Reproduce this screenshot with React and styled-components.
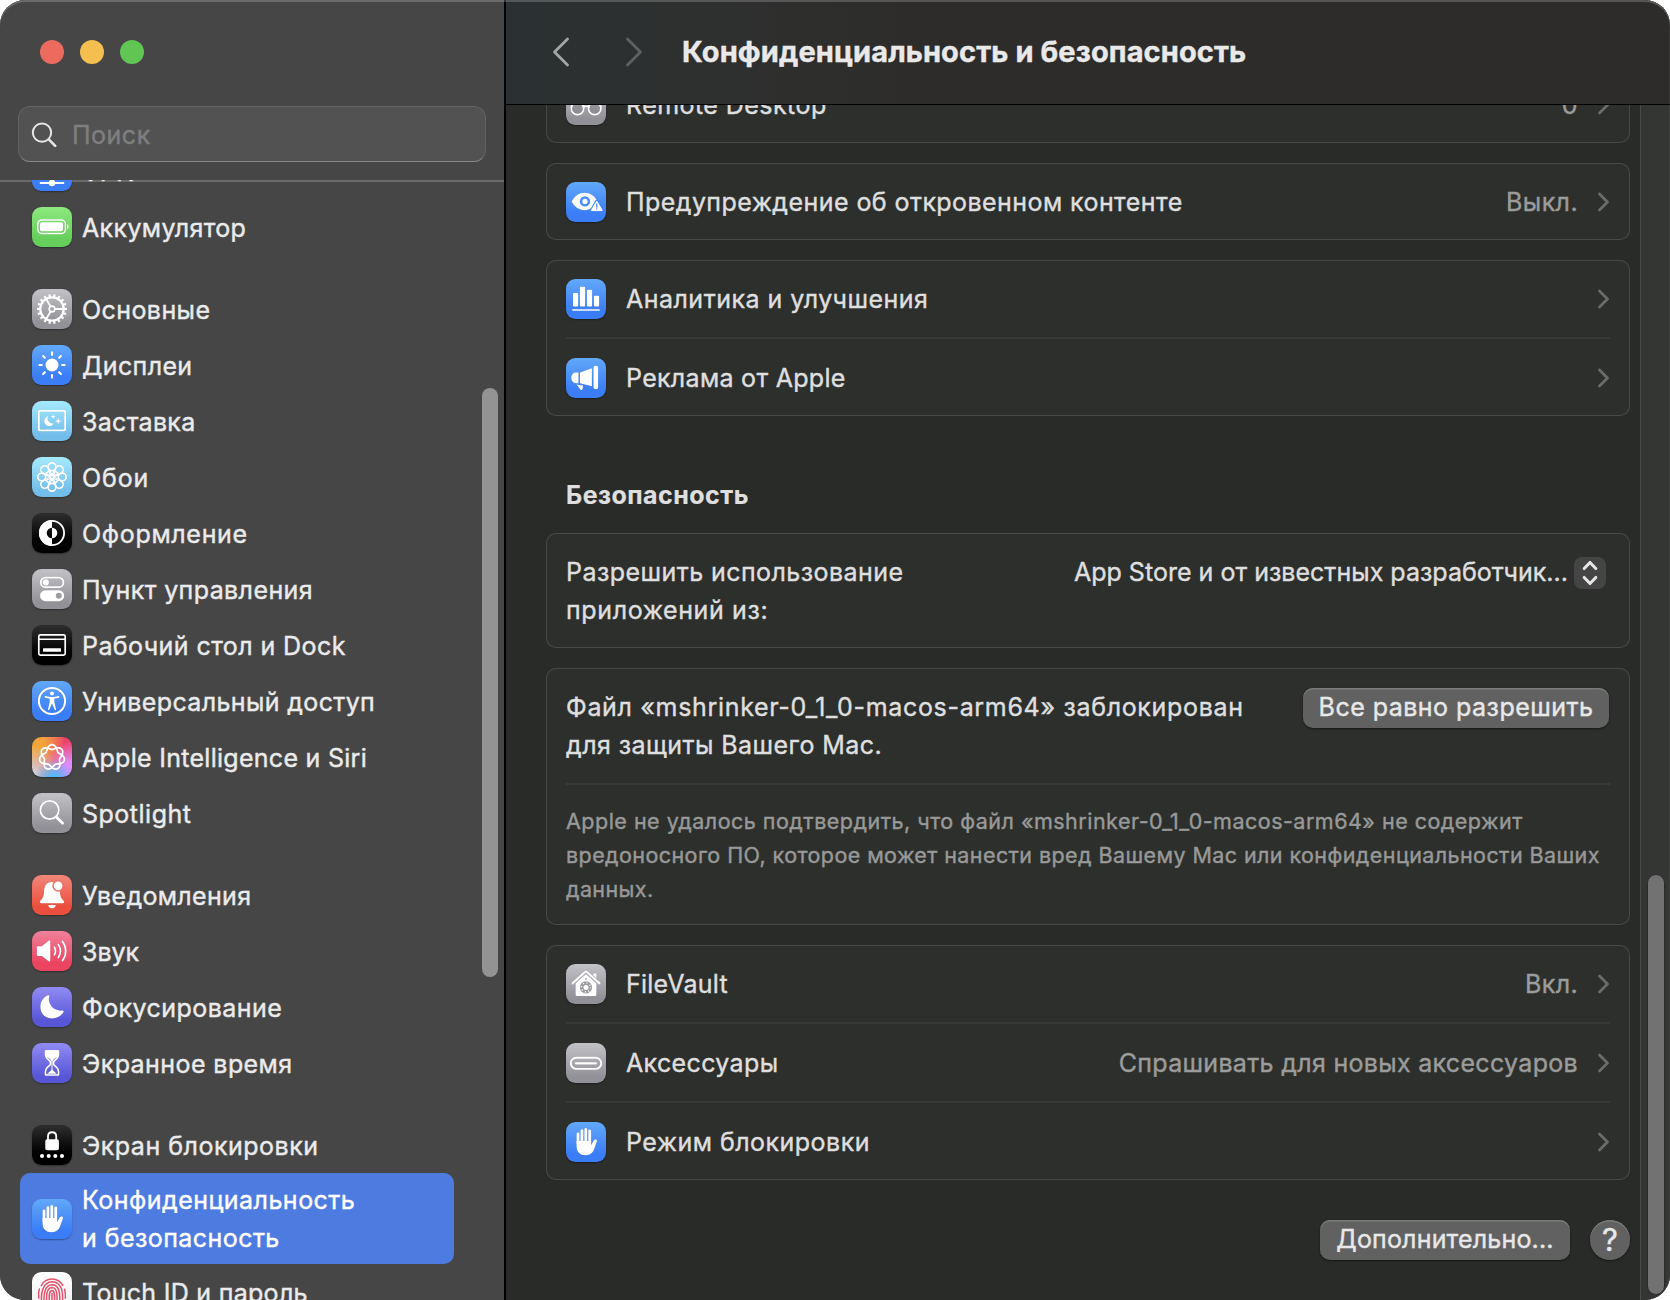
import React from "react";
import styled, { createGlobalStyle, css } from "styled-components";

const GlobalStyle = createGlobalStyle`
  *, *::before, *::after { box-sizing: border-box; }
  body { margin: 0; background: #fff; }
  #root {
    font-family: Inter, "Open Sans", sans-serif;
    font-size: 25px;
    line-height: 38px;
    -webkit-text-stroke: 0.4px currentColor;
  }
`;

/* ---------- window ---------- */

const Window = styled.div`
  position: relative;
  display: grid;
  grid-template-columns: 506px 1fr;
  width: 1670px;
  height: 1300px;
  overflow: hidden;
  border-radius: 25px;
  background: #292b28;

  &::after {
    content: "";
    position: absolute;
    inset: 0;
    border-radius: inherit;
    box-shadow: inset 0 2px 0 rgba(255, 255, 255, 0.2), inset -1px 0 0 rgba(255, 255, 255, 0.06);
    pointer-events: none;
  }
`;

const Label = styled.span`
  display: block;
  white-space: nowrap;
  letter-spacing: ${(p) => p.$ls ?? 0.45}px;
`;

/* ---------- icon tiles ---------- */

const tones = {
  gray: "linear-gradient(#c3c2c7, #929197 85%)",
  blue: "linear-gradient(#62a8f9, #3a7df6 80%)",
  cyan: "linear-gradient(#a5eafd, #73bdea 85%)",
  black: "linear-gradient(#2e2e2e, #000 70%)",
  green: "linear-gradient(#8de87e, #66cf5b 80%)",
  red: "linear-gradient(#f1877b, #ea4e3d 80%)",
  pink: "linear-gradient(#f0819b, #ea4461 80%)",
  purple: "linear-gradient(#918bf2, #5855d6 85%)",
  white: "linear-gradient(#ffffff, #eeeeee)",
  siri: `radial-gradient(circle at 55% 108%, #55b8fb 0 10%, transparent 42%),
    radial-gradient(circle at 0% 92%, #d3cdd6 0 6%, transparent 52%),
    radial-gradient(circle at 100% 82%, #dd8cfb 0 15%, transparent 55%),
    radial-gradient(circle at 0% 15%, #f2a63a 0 18%, transparent 62%),
    linear-gradient(100deg, #f08f55, #ee4369 70%)`,
};

const Tile = styled.span`
  flex: none;
  width: 40px;
  height: 40px;
  border-radius: 9.5px;
  background: ${(p) => tones[p.$tone]};
  box-shadow: 0 1px 1.5px rgba(0, 0, 0, 0.35);

  svg {
    display: block;
    width: 40px;
    height: 40px;
    ${(p) => p.$tone !== "white" && css`filter: drop-shadow(0 0.6px 0.6px rgba(0, 0, 0, 0.18));`}
  }
`;

const Glyph = ({ children }) => (
  <svg viewBox="0 0 40 40" fill="none" stroke="#fff" strokeWidth="1.8" strokeLinecap="round" strokeLinejoin="round">
    {children}
  </svg>
);

const solid = { fill: "#fff", stroke: "none" };
const around = (n, fn) => Array.from({ length: n }, (_, i) => fn((i * 360) / n));

const siriPath = (() => {
  const pts = [];
  for (let i = 0; i < 280; i++) {
    const t = (i / 280) * Math.PI * 4;
    const r = 10.2 + 2.4 * Math.cos(3.5 * t);
    pts.push(`${(20 + r * Math.sin(t)).toFixed(2)} ${(20.3 - r * Math.cos(t)).toFixed(2)}`);
  }
  return `M${pts.join("L")}Z`;
})();

const icons = {
  vpn: (
    <Glyph>
      <circle cx="20" cy="15" r="9" />
      <path d="M20 24v5M11 15h18M8.5 32H31.5" />
      <circle {...solid} cx="20" cy="32" r="3.3" />
    </Glyph>
  ),
  battery: (
    <Glyph>
      <rect x="5.8" y="13" width="27.6" height="13.4" rx="4" strokeWidth="1.5" />
      <rect {...solid} x="8" y="15.2" width="23" height="9" rx="1.8" />
      <path {...solid} d="M35.2 17.2c2 .8 2 4.2 0 5Z" />
    </Glyph>
  ),
  gear: (
    <Glyph>
      <g strokeWidth="2.3" strokeLinecap="butt">
        {around(18, (a) => (
          <path key={a} d="M20 5V8.4" transform={`rotate(${a + 10} 20 20)`} />
        ))}
      </g>
      <circle cx="20" cy="20" r="11.7" strokeWidth="2.3" />
      <circle cx="20" cy="20" r="2.8" strokeWidth="1.8" />
      <g strokeWidth="1.9">
        {[90, 210, 330].map((a) => (
          <path key={a} d="M20 17.2V8.4" transform={`rotate(${a} 20 20)`} />
        ))}
      </g>
    </Glyph>
  ),
  sun: (
    <Glyph>
      <circle {...solid} cx="20" cy="20" r="6.5" />
      {around(8, (a) => (
        <path key={a} d="M20 7.4V9.9" strokeWidth="2.1" transform={`rotate(${a} 20 20)`} />
      ))}
    </Glyph>
  ),
  screensaver: (
    <Glyph>
      <rect x="6.9" y="9.9" width="26.2" height="19.4" rx="0.6" strokeWidth="1.8" strokeLinejoin="miter" />
      <path {...solid} d="M16.3 15A5.1 5.1 0 1 0 21.9 22.3A5 5 0 0 1 16.3 15Z" />
      <path {...solid} d="M21.2 13l.7 1.9 1.9.7-1.9.7-.7 1.9-.7-1.9-1.9-.7 1.9-.7ZM26.2 16.6l.9 2.6 2.6.9-2.6.9-.9 2.6-.9-2.6-2.6-.9 2.6-.9Z" />
    </Glyph>
  ),
  flower: (
    <Glyph>
      <g strokeWidth="1.7">
        {around(8, (a) => (
          <g key={a} transform={`rotate(${a} 20 20)`}>
            <circle cx="20" cy="9.7" r="3.9" />
            <path d="M17.2 12.4C18.4 13.8 19.2 16 20 18.6C20.8 16 21.6 13.8 22.8 12.4" strokeWidth="1.3" />
          </g>
        ))}
        <circle cx="20" cy="20" r="1.6" strokeWidth="1.1" />
      </g>
    </Glyph>
  ),
  contrast: (
    <Glyph>
      <circle cx="20" cy="20" r="12.1" strokeWidth="1.8" />
      <path {...solid} d="M20 7A13 13 0 0 0 20 33V25.3A5.3 5.3 0 0 1 20 14.7Z" />
      <path {...solid} d="M20 14.7A5.3 5.3 0 0 1 20 25.3Z" />
    </Glyph>
  ),
  toggles: (
    <Glyph>
      <rect x="8.8" y="8.6" width="22.6" height="9.6" rx="4.8" strokeWidth="1.8" />
      <circle {...solid} cx="13.8" cy="13.4" r="3.1" />
      <rect {...solid} x="8" y="21.2" width="24.2" height="11" rx="5.5" />
      <circle cx="26.8" cy="26.7" r="3" fill="#9d9ca1" stroke="none" />
    </Glyph>
  ),
  dock: (
    <Glyph>
      <rect x="6.8" y="9.9" width="26.4" height="20.2" rx="1.6" strokeWidth="1.7" />
      <path d="M7 14.2H33" strokeWidth="1.4" />
      <rect {...solid} x="11" y="23.3" width="18" height="3.5" rx="0.5" />
    </Glyph>
  ),
  accessibility: (
    <Glyph>
      <circle cx="20" cy="20" r="13.1" strokeWidth="2" />
      <circle {...solid} cx="20" cy="12.6" r="2" />
      <path d="M13.4 15.9C17.6 17 22.4 17 26.6 15.9" strokeWidth="1.7" />
      <path {...solid} d="M17.6 16.5H22.4L22.3 20.8L24 28.2c.2 1-1.1 1.3-1.4.4L20 22.4L17.4 28.6c-.3.9-1.6.6-1.4-.4L17.7 20.8Z" />
    </Glyph>
  ),
  siri: (
    <Glyph>
      <path d={siriPath} strokeWidth="1.8" />
    </Glyph>
  ),
  search: (
    <Glyph>
      <circle cx="17.6" cy="17" r="9.2" strokeWidth="1.8" />
      <path d="M24.4 24L30.6 30.2" strokeWidth="2.8" />
    </Glyph>
  ),
  bell: (
    <Glyph>
      <path {...solid} d="M20 7C15 7 12.4 10.4 12.2 15.2C12 20.6 11.2 22.6 8.5 25.6C7.3 27 7.9 28.3 9.4 28.3H30.6C32.1 28.3 32.7 27 31.5 25.6C28.8 22.6 28 20.6 27.8 15.2C27.6 10.4 25 7 20 7Z" />
      <path {...solid} d="M16.2 29.9H23.8C23.4 32.2 22 33.3 20 33.3C18 33.3 16.6 32.2 16.2 29.9Z" />
      <circle cx="26.1" cy="10.8" r="5.1" fill="#fff" stroke="#ee7568" strokeWidth="1.5" />
    </Glyph>
  ),
  speaker: (
    <Glyph>
      <path {...solid} d="M6 15.2H9.8L16.4 9.9C17.4 9.1 18.3 9.5 18.3 10.7V29.3C18.3 30.5 17.4 30.9 16.4 30.1L9.8 24.9H6C5.2 24.9 4.9 24.4 4.9 23.7V16.4C4.9 15.7 5.2 15.2 6 15.2Z" />
      <path d="M22.4 16.2C23.7 18.5 23.7 21.5 22.4 23.8M26.3 13.4C28.9 17.4 28.9 22.6 26.3 26.6M30.5 10.4C34.8 16 34.8 24 30.5 29.6" strokeWidth="1.7" />
    </Glyph>
  ),
  moon: (
    <Glyph>
      <path {...solid} d="M16 8.3C16.9 7.9 17.6 8.5 17.2 9.4C15.2 15.8 21 24.6 30.4 23.6C31.5 23.5 32 24.1 31.5 25C25.9 34.8 8.4 33.6 8.4 19.8C8.4 14.4 11.6 10.2 16 8.3Z" />
    </Glyph>
  ),
  hourglass: (
    <Glyph>
      <path d="M13.6 8H26.4C26.9 13 26.6 14.6 21.6 18.6V21.6C26.6 25.6 26.9 27.2 26.4 32H13.6C13.1 27.2 13.4 25.6 18.4 21.6V18.6C13.4 14.6 13.1 13 13.6 8Z" strokeWidth="1.6" />
      <path {...solid} d="M13 7.2H27L26.2 13.2C24 14.4 22 15.6 20 18.4C18 15.6 16 14.4 13.8 13.2ZM15.2 30.8L20 26.4L24.8 30.8Z" />
      <path d="M20 18V27" strokeWidth="1.1" />
    </Glyph>
  ),
  lock: (
    <Glyph>
      <rect {...solid} x="13.3" y="14.2" width="13.6" height="11" rx="1.8" />
      <path d="M16 15V11.2C16 5.9 24.2 5.9 24.2 11.2V15" strokeWidth="1.8" />
      {[10, 16.7, 23.3, 30].map((x) => (
        <circle key={x} {...solid} cx={x} cy="31" r="2" />
      ))}
    </Glyph>
  ),
  hand: (
    <Glyph>
      <path d="M12 11.8V22M15.9 8.6V22M19.8 7.5V22M23.7 9V22" strokeWidth="2.8" />
      <path {...solid} d="M10.6 19H25.1V23.2C26 21.6 27 19.6 27.7 18.4c.9-1.5 3.7-1 3.2.9L28.4 26.6C26.9 31 24 33.3 19.6 33.3c-6 0-9-3.8-9-8.8Z" />
    </Glyph>
  ),
  fingerprint: (
    <Glyph>
      <g stroke="#e2546d" strokeWidth="1.5">
        <path d="M9.2 13.6C14 4.8 26 4.8 30.8 13.4M32.6 17.2C33.4 20 33.6 23 33.3 26M6.8 26C6.2 23 6.4 19.8 7.4 17" />
        <path d="M9.6 30C8.6 21 11 10 20 9.8C27 9.8 30.6 15.8 30.6 24V29" />
        <path d="M12.2 32C11.2 22 13 12.8 20 12.7C26.4 12.8 28 19 27.8 29" />
        <path d="M15 33C14.2 25 14 16 20 15.6C25 15.8 25.4 22 25 32" />
        <path d="M17.6 33C17.2 27 16.2 18.8 20 18.5C23.2 18.7 22.8 25 22.4 33M20 21.5V33" />
      </g>
    </Glyph>
  ),
  binoculars: (
    <Glyph>
      <g strokeWidth="1.7">
        <circle cx="11.5" cy="23.4" r="6.2" fill="rgba(120,120,125,.25)" />
        <circle cx="28.7" cy="23.4" r="6.2" fill="rgba(120,120,125,.25)" />
        <path d="M17.6 22.2C19 20.8 21.2 20.8 22.6 22.2M5.4 21.6L10 11.5C12 9 17 9.4 17.6 12.5V21M34.8 21.6L30.2 11.5C28.2 9 23.2 9.4 22.6 12.5V21" />
      </g>
    </Glyph>
  ),
  eye: (
    <Glyph>
      <path {...solid} d="M5.6 19.6C8.6 14 13.2 10.8 18.6 10.8C24 10.8 28.6 14 31.6 19.6C28.6 25.2 24 28.2 18.6 28.2C13.2 28.2 8.6 25.2 5.6 19.6Z" />
      <circle cx="19" cy="19.4" r="3.9" stroke="#4a8ff8" strokeWidth="2.6" />
      <path d="M30.8 19.6L36 28.3H25.6Z" fill="#fff" stroke="#448af8" strokeWidth="3.6" />
      <path d="M30.8 19.6L36 28.3H25.6Z" fill="#fff" strokeWidth="1.2" />
      <path d="M30.8 22.2V25M30.8 26.9V27" stroke="#3f84f7" strokeWidth="1.3" />
    </Glyph>
  ),
  bars: (
    <Glyph>
      <rect {...solid} x="7" y="14" width="5.2" height="13.6" rx="1" />
      <rect {...solid} x="13.9" y="7.8" width="5.2" height="19.8" rx="1" />
      <rect {...solid} x="20.9" y="10.8" width="5.2" height="16.8" rx="1" />
      <rect {...solid} x="27.9" y="16.8" width="5.2" height="10.8" rx="1" />
      <path d="M6.8 31H33.2" strokeWidth="1.5" />
    </Glyph>
  ),
  megaphone: (
    <Glyph>
      <rect {...solid} x="27.5" y="7.8" width="4.6" height="23.4" rx="2" />
      <path {...solid} d="M14 14.4L25.9 10.3V28.2L14 25.2Z" />
      <path {...solid} d="M12.5 14.4V25.2H10C3.6 25.2 3.8 14.4 10 14.4Z" />
      <path {...solid} d="M10.6 26.6L17 27.4L16.6 31C16.4 32 15 32.3 14.4 31.4Z" />
    </Glyph>
  ),
  vault: (
    <Glyph>
      <path {...solid} d="M27.2 9.6H30.4V15.4L27.2 12.4Z" />
      <path {...solid} d="M9.6 19L20 9.9L30.4 19V30.4C30.4 31.5 29.8 32 28.8 32H11.2C10.2 32 9.6 31.5 9.6 30.4Z" />
      <path d="M6.6 19.4L19 8.2Q20 7.4 21 8.2L33.4 19.4" stroke="#b3b2b7" strokeWidth="4" />
      <path d="M6.6 19.2L19 8Q20 7.2 21 8L33.4 19.2" strokeWidth="1.9" />
      <circle cx="20" cy="23.4" r="4.3" stroke="#9b9a9f" strokeWidth="3.6" />
      <circle cx="20" cy="23.4" r="4.5" stroke="#fff" strokeWidth="1.5" strokeDasharray="1 2.53" strokeLinecap="butt" />
      <circle cx="20" cy="15" r="1" fill="#aaa9ae" stroke="none" />
    </Glyph>
  ),
  port: (
    <Glyph>
      <rect x="4.8" y="14.7" width="30.4" height="11.2" rx="5.6" strokeWidth="1.9" />
      <path d="M9.8 20.3H30.2" strokeWidth="2.2" />
    </Glyph>
  ),
};

const Icon = ({ name, tone }) => <Tile $tone={tone}>{icons[name]}</Tile>;

/* ---------- sidebar ---------- */

const Sidebar = styled.aside`
  display: flex;
  flex-direction: column;
  height: 1300px;
  background: #464646;
  border-right: 2px solid #000;
  color: #ebebeb;
`;

const TrafficLights = styled.div`
  display: flex;
  gap: 16px;
  padding: 40px 40px 42px;
`;

const Light = styled.span`
  width: 24px;
  height: 24px;
  border-radius: 50%;
  background: ${(p) => p.$color};
`;

const SearchField = styled.div`
  display: flex;
  align-items: center;
  gap: 15px;
  flex: none;
  height: 56px;
  margin: 0 18px 18px;
  padding: 1px 0 0 12px;
  border: 1px solid #636363;
  border-bottom-color: #868686;
  border-radius: 12px;
  background: #525252;
  color: #7f7f7f;

  svg { flex: none; }
`;

const SidebarBody = styled.div`
  display: flex;
  flex: 1;
  min-height: 0;
  overflow: hidden;
  box-shadow: inset 0 2px 0 #6b6b6b;
`;

const NavList = styled.nav`
  display: flex;
  flex-direction: column;
  gap: 26px;
  width: 482px;
  margin-top: -37px;
  padding: 0 28px 0 20px;
`;

const NavGroup = styled.div`
  display: flex;
  flex-direction: column;
`;

const NavItem = styled.a`
  display: flex;
  align-items: center;
  gap: 10px;
  flex: none;
  min-height: ${(p) => (p.$active ? 91 : 56)}px;
  padding-left: 12px;
  border-radius: 10px;
  ${(p) => p.$active && css`
    background: #4e7be0;
    color: #fff;
  `}
`;

const NavText = styled.span`
  padding-top: 1px;
`;

const SidebarThumb = styled.div`
  width: 16px;
  height: 589px;
  margin-top: 208px;
  border-radius: 8px;
  background: #939393;
`;

const nav = [
  [
    ["vpn", "blue", ["VPN"]],
    ["battery", "green", ["Аккумулятор", 0.36]],
  ],
  [
    ["gear", "gray", ["Основные", 0.42]],
    ["sun", "blue", ["Дисплеи", 0.35]],
    ["screensaver", "cyan", ["Заставка", 0.3]],
    ["flower", "cyan", ["Обои", 0.9]],
    ["contrast", "black", ["Оформление", 0.68]],
    ["toggles", "gray", ["Пункт управления", 0.4]],
    ["dock", "black", ["Рабочий стол и Dock", 0.42]],
    ["accessibility", "blue", ["Универсальный доступ", 0.36]],
    ["siri", "siri", ["Apple Intelligence и Siri", 0.28]],
    ["search", "gray", ["Spotlight", 0.5]],
  ],
  [
    ["bell", "red", ["Уведомления", 0.33]],
    ["speaker", "pink", ["Звук", 0]],
    ["moon", "purple", ["Фокусирование", 0.44]],
    ["hourglass", "purple", ["Экранное время", 0.42]],
  ],
  [
    ["lock", "black", ["Экран блокировки", 0.5]],
    ["hand", "blue", ["Конфиденциальность", 0.47], ["и безопасность", 0.44]],
    ["fingerprint", "white", ["Touch ID и пароль", 0.28]],
  ],
];

/* ---------- main pane ---------- */

const Main = styled.main`
  display: flex;
  flex-direction: column;
  height: 1300px;
  min-width: 0;
  color: #dfdfdf;
`;

const Header = styled.header`
  display: flex;
  align-items: center;
  flex: none;
  height: 105px;
  padding: 0 0 1px 46px;
  border-bottom: 1px solid #000;
  background: linear-gradient(90deg, #2b3032, #2e302f 16%, #2d2c2a 36%);
  color: #e9e9e9;

  svg { margin-right: 55px; }
  svg + svg { margin-right: 39px; }
`;

const Title = styled.h1`
  margin: 0;
  font-size: 29px;
  font-weight: 700;
  letter-spacing: 0.1px;
  white-space: nowrap;
`;

const MainBody = styled.div`
  display: flex;
  flex: 1;
  min-height: 0;
  overflow: hidden;
`;

const Content = styled.div`
  display: flex;
  flex-direction: column;
  gap: 20px;
  width: 1134px;
  margin-top: -39px;
  padding: 0 10px 0 40px;
`;

const Card = styled.section`
  flex: none;
  border-radius: 10px;
  background: #2d2f2c;
  box-shadow: inset 0 0 0 1px #484a48;
`;

const Row = styled.div`
  display: flex;
  align-items: center;
  gap: 20px;
  height: 77px;
  padding: 1px 20px 0;
`;

const Divider = styled.div`
  height: 2px;
  margin: 0 20px;
  background: #383a38;
`;

const Value = styled.span`
  display: flex;
  align-items: center;
  gap: 20px;
  margin-left: auto;
  color: #9b9c9b;
`;

const TextRow = styled.div`
  display: flex;
  justify-content: space-between;
  align-items: flex-start;
  padding: 20px 21px 19px 20px;
`;

const SectionTitle = styled.h2`
  margin: 40px 0 0 20px;
  height: 37px;
  padding-top: 1px;
  line-height: 37px;
  font-size: 25px;
  font-weight: 700;
  letter-spacing: 0.47px;
  -webkit-text-stroke-width: 0.2px;
`;

const Popup = styled.div`
  display: flex;
  align-items: flex-start;
  gap: 6px;
  padding-right: 3px;
`;

const Stepper = styled.span`
  display: grid;
  place-items: center;
  width: 32px;
  height: 32px;
  margin-top: 4px;
  border-radius: 8px;
  background: #444544;
`;

const Button = styled.button`
  display: flex;
  align-items: center;
  justify-content: center;
  width: ${(p) => p.$width}px;
  height: 40px;
  padding: 0 0 2px;
  border: 0;
  border-radius: ${(p) => (p.$round ? 20 : 10)}px;
  background: #616161;
  box-shadow: inset 0 1.5px 0 #7a7a7a, 0 1px 2px rgba(0, 0, 0, 0.5);
  color: #e8e8e8;
  font: inherit;
  ${(p) => p.$round && css`
    padding: 0;
    font-size: 31px;
  `}
`;

const Note = styled.p`
  margin: 0;
  padding: 19px 20px;
  font-size: 21.5px;
  line-height: 34px;
  color: #989998;
`;

const Footer = styled.footer`
  display: flex;
  justify-content: flex-end;
  gap: 20px;
  padding-top: 20px;
`;

const Track = styled.div`
  display: flex;
  justify-content: center;
  flex: 1;
  padding-top: 769px;
  border-left: 1px solid #484a48;
  background: #343634;
`;

const Thumb = styled.div`
  width: 18px;
  height: 421px;
  border-radius: 9px;
  border: 1px solid #2a2a2a;
  background: #727272;
`;

const NavChevron = ({ d, color }) => (
  <svg width="18" height="30" viewBox="0 0 18 30" fill="none" stroke={color} strokeWidth="2.8" strokeLinecap="round" strokeLinejoin="round">
    <path d={d} />
  </svg>
);

const Disclosure = () => (
  <svg width="12" height="20" viewBox="0 0 12 20" fill="none" stroke="#6b6c6b" strokeWidth="2.7" strokeLinecap="round" strokeLinejoin="round">
    <path d="M1.5 2L9.5 10L1.5 18" />
  </svg>
);

const LinkRow = ({ icon, tone, text, ls, value, valueLs }) => (
  <Row>
    <Icon name={icon} tone={tone} />
    <Label $ls={ls}>{text}</Label>
    <Value>
      {value && <Label $ls={valueLs}>{value}</Label>}
      <Disclosure />
    </Value>
  </Row>
);

export default function App() {
  return (
    <>
      <GlobalStyle />
      <Window>
        <Sidebar>
          <TrafficLights>
            <Light $color="#ed6a5e" />
            <Light $color="#f5bf4f" />
            <Light $color="#61c554" />
          </TrafficLights>
          <SearchField>
            <svg width="26" height="26" viewBox="0 0 26 26" fill="none" stroke="#e6e6e6" strokeLinecap="round">
              <circle cx="11" cy="10.6" r="9.2" strokeWidth="2" />
              <path d="M17.8 17.4L24.2 23.8" strokeWidth="2.6" />
            </svg>
            <Label $ls={0.5}>Поиск</Label>
          </SearchField>
          <SidebarBody>
            <NavList>
              {nav.map((group, i) => (
                <NavGroup key={i}>
                  {group.map(([icon, tone, ...lines]) => (
                    <NavItem key={icon} $active={lines.length > 1}>
                      <Icon name={icon} tone={tone} />
                      <NavText>
                        {lines.map(([text, ls]) => (
                          <Label key={text} $ls={ls}>{text}</Label>
                        ))}
                      </NavText>
                    </NavItem>
                  ))}
                </NavGroup>
              ))}
            </NavList>
            <SidebarThumb />
          </SidebarBody>
        </Sidebar>

        <Main>
          <Header>
            <NavChevron d="M15.5 2L2.5 15L15.5 28" color="#a3a5a6" />
            <NavChevron d="M2.5 2L15.5 15L2.5 28" color="#5e6162" />
            <Title>Конфиденциальность и безопасность</Title>
          </Header>
          <MainBody>
            <Content>
              <Card>
                <LinkRow icon="binoculars" tone="gray" text="Remote Desktop" ls={0.44} value="0" />
              </Card>
              <Card>
                <LinkRow icon="eye" tone="blue" text="Предупреждение об откровенном контенте" ls={0.43} value="Выкл." valueLs={0.4} />
              </Card>
              <Card>
                <LinkRow icon="bars" tone="blue" text="Аналитика и улучшения" ls={0.48} />
                <Divider />
                <LinkRow icon="megaphone" tone="blue" text="Реклама от Apple" ls={0.3} />
              </Card>

              <SectionTitle>Безопасность</SectionTitle>

              <Card>
                <TextRow>
                  <div>
                    <Label $ls={0.44}>Разрешить использование</Label>
                    <Label $ls={0.62}>приложений из:</Label>
                  </div>
                  <Popup>
                    <Label $ls={0.02}>App Store и от известных разработчик...</Label>
                    <Stepper>
                      <svg width="16" height="26" viewBox="0 0 16 26" fill="none" stroke="#e6e6e6" strokeWidth="3" strokeLinecap="round" strokeLinejoin="round">
                        <path d="M2.2 8.6L8 2.4L13.8 8.6M2.2 17.4L8 23.6L13.8 17.4" />
                      </svg>
                    </Stepper>
                  </Popup>
                </TextRow>
              </Card>

              <Card>
                <TextRow>
                  <div>
                    <Label $ls={0.68}>Файл «mshrinker-0_1_0-macos-arm64» заблокирован</Label>
                    <Label $ls={0.43}>для защиты Вашего Mac.</Label>
                  </div>
                  <Button $width={306}>
                    <Label $ls={0.47}>Все равно разрешить</Label>
                  </Button>
                </TextRow>
                <Divider />
                <Note>
                  <Label $ls={0.49}>Apple не удалось подтвердить, что файл «mshrinker-0_1_0-macos-arm64» не содержит</Label>
                  <Label $ls={0.42}>вредоносного ПО, которое может нанести вред Вашему Mac или конфиденциальности Ваших</Label>
                  <Label $ls={0.4}>данных.</Label>
                </Note>
              </Card>

              <Card>
                <LinkRow icon="vault" tone="gray" text="FileVault" ls={0.25} value="Вкл." valueLs={0.35} />
                <Divider />
                <LinkRow icon="port" tone="gray" text="Аксессуары" ls={0.36} value="Спрашивать для новых аксессуаров" valueLs={0.31} />
                <Divider />
                <LinkRow icon="hand" tone="blue" text="Режим блокировки" ls={0.47} />
              </Card>

              <Footer>
                <Button $width={250}>
                  <Label $ls={0.18}>Дополнительно...</Label>
                </Button>
                <Button $width={40} $round>
                  <Label $ls={0}>?</Label>
                </Button>
              </Footer>
            </Content>
            <Track>
              <Thumb />
            </Track>
          </MainBody>
        </Main>
      </Window>
    </>
  );
}
